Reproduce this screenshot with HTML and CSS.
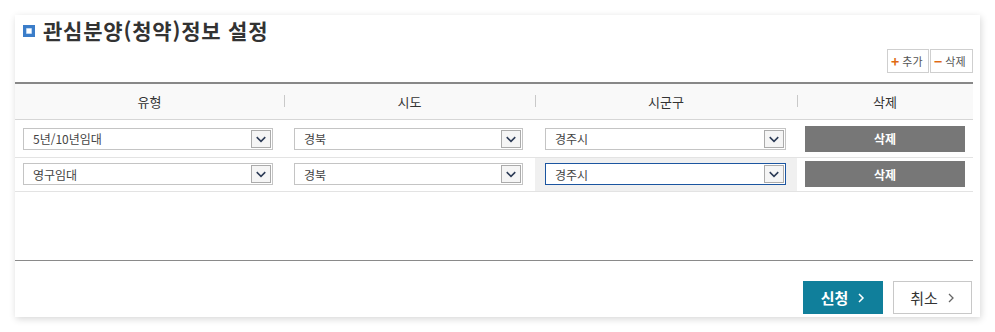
FILE: index.html
```html
<!DOCTYPE html>
<html lang="ko">
<head>
<meta charset="utf-8">
<title>관심분양(청약)정보 설정</title>
<link rel="stylesheet" href="styles.css">
</head>
<body>
<div class="page">
  <div class="card">
    <h2 class="title"><span class="title-icon"></span>관심분양(청약)정보 설정</h2>
    <div class="tools">
      <button class="tool"><span class="sign">+</span>추가</button>
      <button class="tool"><span class="sign">−</span>삭제</button>
    </div>
    <table class="grid">
      <colgroup>
        <col class="c1"><col class="c2"><col class="c3"><col class="c4">
      </colgroup>
      <thead>
        <tr><th>유형</th><th class="sep">시도</th><th class="sep">시군구</th><th class="sep">삭제</th></tr>
      </thead>
      <tbody>
        <tr class="r1">
          <td><div class="sel w1"><span>5년/10년임대</span><i class="arr"><svg viewBox="0 0 19 18" width="19" height="18"><path d="M5 7 L9.5 11.5 L14 7" fill="none" stroke="#2c3b56" stroke-width="1.6"/></svg></i></div></td>
          <td class="pl"><div class="sel w2"><span>경북</span><i class="arr"><svg viewBox="0 0 19 18" width="19" height="18"><path d="M5 7 L9.5 11.5 L14 7" fill="none" stroke="#2c3b56" stroke-width="1.6"/></svg></i></div></td>
          <td class="pl"><div class="sel w3"><span>경주시</span><i class="arr"><svg viewBox="0 0 19 18" width="19" height="18"><path d="M5 7 L9.5 11.5 L14 7" fill="none" stroke="#2c3b56" stroke-width="1.6"/></svg></i></div></td>
          <td class="del-cell"><button class="del">삭제</button></td>
        </tr>
        <tr class="r2">
          <td><div class="sel w1"><span>영구임대</span><i class="arr"><svg viewBox="0 0 19 18" width="19" height="18"><path d="M5 7 L9.5 11.5 L14 7" fill="none" stroke="#2c3b56" stroke-width="1.6"/></svg></i></div></td>
          <td class="pl"><div class="sel w2"><span>경북</span><i class="arr"><svg viewBox="0 0 19 18" width="19" height="18"><path d="M5 7 L9.5 11.5 L14 7" fill="none" stroke="#2c3b56" stroke-width="1.6"/></svg></i></div></td>
          <td class="pl hover"><div class="sel w3 focus"><span>경주시</span><i class="arr"><svg viewBox="0 0 19 18" width="19" height="18"><path d="M5 7 L9.5 11.5 L14 7" fill="none" stroke="#2c3b56" stroke-width="1.6"/></svg></i></div></td>
          <td class="del-cell"><button class="del">삭제</button></td>
        </tr>
      </tbody>
    </table>
    <div class="spacer"></div>
    <div class="actions">
      <button class="btn primary">신청<svg class="chev" viewBox="0 0 8 12" width="8" height="12"><path d="M2 2 L6 6 L2 10" fill="none" stroke="#fff" stroke-width="1.5"/></svg></button>
      <button class="btn">취소<svg class="chev" viewBox="0 0 8 12" width="8" height="12"><path d="M2 2 L6 6 L2 10" fill="none" stroke="#666" stroke-width="1.3"/></svg></button>
    </div>
  </div>
</div>
</body>
</html>
```

FILE: styles.css
```css
* { box-sizing: border-box; }
html, body { margin: 0; padding: 0; background: #fff; }
body {
  font-family: "Noto Sans CJK KR", "Noto Sans", "Liberation Sans", sans-serif;
  color: #333;
}
.page { padding: 15px 15px 15px 15px; }
.card {
  width: 965px;
  height: 302px;
  background: #fff;
  padding: 0 7px 0 0;
  box-shadow: 1px 2px 7px rgba(0,0,0,0.16);
  display: flex;
  flex-direction: column;
}
.title {
  margin: 0;
  height: 30px;
  padding: 0 0 0 8px;
  display: flex;
  align-items: center;
  font-size: 21px;
  font-weight: 700;
  color: #333;
  letter-spacing: 0.8px;
}
.title-icon {
  width: 12px;
  height: 12px;
  border: 3px solid #3b7dc9;
  background: #fff;
  margin-right: 8px;
  margin-top: 2px;
  box-shadow: inset 0 0 0 0.5px #7fb0e6;
}
.tools {
  display: flex;
  justify-content: flex-end;
  gap: 1px;
  margin-top: 4px;
  height: 24px;
}
.tool {
  height: 24px;
  padding: 0 4px 0 3px;
  border: 1px solid #cfcfcf;
  background: #fff;
  font-family: inherit;
  font-size: 11px;
  color: #555;
  display: flex;
  align-items: center;
  line-height: 1;
}
.tool:first-child { width: 42px; }
.tool:last-child { width: 43px; }
.sign { color: #e06a12; font-weight: 700; font-size: 14px; margin-right: 3px; }
.grid {
  margin-top: 9px;
  width: 958px;
  border-collapse: collapse;
  table-layout: fixed;
  border-top: 2px solid #888;
}
.c1 { width: 269px; } .c2 { width: 251px; } .c3 { width: 262px; } .c4 { width: 176px; }
.grid th {
  height: 36px;
  background: #f9f9f9;
  font-weight: 400;
  font-size: 13px;
  color: #333;
  border-bottom: 1px solid #d6d6d6;
  padding: 0;
}
.grid th.sep {
  background: #f9f9f9 linear-gradient(#c9c9c9, #c9c9c9) left center / 1px 12px no-repeat;
}
.grid td {
  padding: 0 0 0 8px;
  border-bottom: 1px solid #e3e3e3;
}
.grid .r1 td { height: 38px; padding-top: 1px; }
.grid .r2 td { height: 34px; }
.grid td.pl { padding-left: 10px; }
.grid td.hover { background: #f0f0f0; }
.sel {
  height: 22px;
  border: 1px solid #c4c4c4;
  background: #fff;
  display: flex;
  align-items: center;
  justify-content: space-between;
  padding: 0 1px 0 9px;
  font-size: 12px;
  color: #444;
}
.sel.focus { border-color: #1b55a0; }
.w1 { width: 250px; } .w2 { width: 229px; } .w3 { width: 241px; }
.arr {
  width: 20px;
  height: 18px;
  border: 1px solid #ababab;
  background: #f5f5f5;
  display: flex;
  align-items: center;
  justify-content: center;
}
.arr svg { display: block; }
.grid td.del-cell { padding-left: 8px; padding-right: 8px; }
.del {
  width: 160px;
  height: 26px;
  border: 0;
  background: #777;
  color: #fff;
  font-family: inherit;
  font-size: 12px;
  font-weight: 700;
}
.spacer {
  flex: 1;
  border-bottom: 1px solid #8a8a8a;
}
.actions {
  display: flex;
  justify-content: flex-end;
  gap: 10px;
  padding: 20px 1px 3px 0;
}
.btn {
  width: 79px;
  height: 33px;
  border: 1px solid #c8c8c8;
  background: #fff;
  font-family: inherit;
  font-size: 15px;
  color: #333;
  display: flex;
  align-items: center;
  justify-content: center;
  gap: 9px;
}
.btn.primary {
  width: 80px;
  background: #107f9b;
  border-color: #107f9b;
  color: #fff;
  font-weight: 700;
}
.chev { display: block; margin-top: 1px; }
```
